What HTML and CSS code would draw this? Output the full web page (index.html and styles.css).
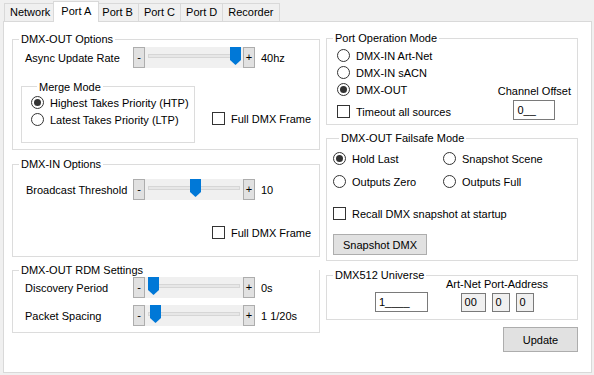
FILE: index.html
```html
<!DOCTYPE html>
<html lang="en">
<head>
    <meta charset="UTF-8">
    <meta name="viewport" content="width=device-width, initial-scale=1.0">
    <title>Port A</title>
    <link rel="stylesheet" href="styles.css">
</head>
<body>
    <div class="tabs">
        <div class="tab">Network</div>
        <div class="tab active">Port A</div>
        <div class="tab">Port B</div>
        <div class="tab">Port C</div>
        <div class="tab">Port D</div>
        <div class="tab">Recorder</div>
    </div>

    <div class="panel">
        <div class="column left">
            <div class="group dmx-out">
                <div class="group-title">DMX-OUT Options</div>
                <div class="slider-row">
                    <span class="label">Async Update Rate</span>
                    <div class="slider">
                        <button class="step">-</button>
                        <div class="track">
                            <svg class="thumb" style="left: 85px" width="11" height="18" viewBox="0 0 11 18"><path d="M0 0H11V13L5.5 18L0 13Z" fill="#0078d7"/></svg>
                        </div>
                        <button class="step">+</button>
                    </div>
                    <span class="value">40hz</span>
                </div>
                <div class="merge-row">
                    <div class="group merge">
                        <div class="group-title">Merge Mode</div>
                        <div class="option"><span class="radio checked"></span>Highest Takes Priority (HTP)</div>
                        <div class="option"><span class="radio"></span>Latest Takes Priority (LTP)</div>
                    </div>
                    <div class="option full-frame"><span class="box"></span>Full DMX Frame</div>
                </div>
            </div>

            <div class="group dmx-in">
                <div class="group-title">DMX-IN Options</div>
                <div class="slider-row">
                    <span class="label">Broadcast Threshold</span>
                    <div class="slider">
                        <button class="step">-</button>
                        <div class="track">
                            <svg class="thumb" style="left: 45px" width="11" height="18" viewBox="0 0 11 18"><path d="M0 0H11V13L5.5 18L0 13Z" fill="#0078d7"/></svg>
                        </div>
                        <button class="step">+</button>
                    </div>
                    <span class="value">10</span>
                </div>
                <div class="option full-frame"><span class="box"></span>Full DMX Frame</div>
            </div>

            <div class="group rdm">
                <div class="group-title">DMX-OUT RDM Settings</div>
                <div class="slider-row">
                    <span class="label">Discovery Period</span>
                    <div class="slider">
                        <button class="step">-</button>
                        <div class="track">
                            <svg class="thumb" style="left: 3px" width="11" height="18" viewBox="0 0 11 18"><path d="M0 0H11V13L5.5 18L0 13Z" fill="#0078d7"/></svg>
                        </div>
                        <button class="step">+</button>
                    </div>
                    <span class="value">0s</span>
                </div>
                <div class="slider-row">
                    <span class="label">Packet Spacing</span>
                    <div class="slider">
                        <button class="step">-</button>
                        <div class="track">
                            <svg class="thumb" style="left: 5px" width="11" height="18" viewBox="0 0 11 18"><path d="M0 0H11V13L5.5 18L0 13Z" fill="#0078d7"/></svg>
                        </div>
                        <button class="step">+</button>
                    </div>
                    <span class="value">1 1/20s</span>
                </div>
            </div>
        </div>

        <div class="column right">
            <div class="group port-mode">
                <div class="group-title">Port Operation Mode</div>
                <div class="port-body">
                    <div class="options">
                        <div class="option"><span class="radio"></span>DMX-IN Art-Net</div>
                        <div class="option"><span class="radio"></span>DMX-IN sACN</div>
                        <div class="option"><span class="radio checked"></span>DMX-OUT</div>
                        <div class="option timeout"><span class="box"></span>Timeout all sources</div>
                    </div>
                    <div class="offset">
                        <span>Channel Offset</span>
                        <div class="field offset-field">0__</div>
                    </div>
                </div>
            </div>

            <div class="group failsafe">
                <div class="group-title">DMX-OUT Failsafe Mode</div>
                <div class="failsafe-grid">
                    <div class="option"><span class="radio checked"></span>Hold Last</div>
                    <div class="option"><span class="radio"></span>Snapshot Scene</div>
                    <div class="option"><span class="radio"></span>Outputs Zero</div>
                    <div class="option"><span class="radio"></span>Outputs Full</div>
                </div>
                <div class="option recall"><span class="box"></span>Recall DMX snapshot at startup</div>
                <button class="win-btn snapshot">Snapshot DMX</button>
            </div>

            <div class="group universe">
                <div class="group-title">DMX512 Universe</div>
                <div class="universe-body">
                    <div class="field universe-field">1____</div>
                    <div class="address">
                        <span>Art-Net Port-Address</span>
                        <div class="address-fields">
                            <div class="field readonly net">00</div>
                            <div class="field readonly">0</div>
                            <div class="field readonly">0</div>
                        </div>
                    </div>
                </div>
            </div>

            <button class="win-btn update">Update</button>
        </div>
    </div>
</body>
</html>
```

FILE: styles.css
```css
body {
    font-family: "Liberation Sans", Arial, sans-serif;
    font-size: 11px;
    color: #000;
    background-color: #F0F0F0;
    margin: 0;
    padding: 0;
    width: 594px;
    height: 375px;
    overflow: hidden;
}

/* tab strip */
.tabs {
    display: flex;
    align-items: flex-end;
    height: 21px;
    padding-left: 4px;
}
.tab {
    height: 18px;
    box-sizing: border-box;
    padding: 0 5px;
    border: 1px solid #D9D9D9;
    border-bottom: none;
    background: #F0F0F0;
    line-height: 17px;
    white-space: nowrap;
}
.tab + .tab {
    margin-left: -1px;
}
.tab.active {
    height: 21px;
    margin: 0 -2px -1px -3px;
    padding: 0 7px;
    background: white;
    position: relative;
    z-index: 1;
    line-height: 19px;
}

.panel {
    display: flex;
    gap: 6px;
    height: 352px;
    box-sizing: border-box;
    margin: 0 2px 0 3px;
    padding: 16px 13px 0 8px;
    border: 1px solid #D9D9D9;
    background: white;
}
.column {
    display: flex;
    flex-direction: column;
}
.column.left {
    width: 308px;
    padding-top: 1px;
}
.column.right {
    width: 252px;
}

/* group boxes */
.group {
    border: 1px solid #DCDCDC;
    box-sizing: border-box;
}
.group-title {
    display: table;
    margin: -8px 0 0 6px;
    padding: 0 2px;
    background: white;
    line-height: 14px;
    white-space: nowrap;
}

/* radios and checkboxes */
.option {
    display: flex;
    align-items: center;
    gap: 6px;
    height: 17px;
    white-space: nowrap;
}
.radio {
    display: flex;
    align-items: center;
    justify-content: center;
    width: 13px;
    height: 13px;
    box-sizing: border-box;
    border: 1px solid #333;
    border-radius: 50%;
    background: white;
}
.radio.checked::after {
    content: '';
    width: 7px;
    height: 7px;
    border-radius: 50%;
    background: #333;
}
.box {
    width: 13px;
    height: 13px;
    box-sizing: border-box;
    border: 1px solid #333;
    background: white;
}

/* trackbars */
.slider-row {
    display: flex;
    align-items: center;
    padding-left: 12px;
    white-space: nowrap;
}
.slider-row .label {
    width: 108px;
}
.slider {
    display: flex;
    width: 122px;
    height: 21px;
}
.step {
    width: 12px;
    height: 21px;
    padding: 0;
    border: 1px solid #ADADAD;
    background: #E1E1E1;
    font-family: inherit;
    font-size: 11px;
    line-height: 17px;
    color: #000;
}
.track {
    flex: 1;
    position: relative;
    background: #F0F0F0;
}
.track::before {
    content: '';
    position: absolute;
    top: 7px;
    left: 3px;
    right: 3px;
    height: 4px;
    box-sizing: border-box;
    border: 1px solid #D6D6D6;
    background: #E7E7E7;
}
.thumb {
    position: absolute;
    top: 0;
    display: block;
}
.value {
    margin-left: 6px;
}

/* left groups */
.dmx-out {
    height: 111px;
}
.dmx-out .slider-row {
    margin-top: 1px;
}
.merge-row {
    display: flex;
    margin-top: 18px;
}
.merge {
    width: 174px;
    height: 57px;
    margin-left: 8px;
    padding: 1px 0 0 9px;
}
.full-frame {
    margin-left: 17px;
    margin-top: 24px;
}
.dmx-in {
    height: 93px;
    margin-top: 14px;
}
.dmx-in .slider-row {
    margin-top: 8px;
    padding-left: 13px;
}
.dmx-in .slider-row .label {
    width: 107px;
}
.dmx-in .full-frame {
    margin-left: 199px;
}
.rdm {
    height: 63px;
    margin-top: 13px;
    display: flex;
    flex-direction: column;
    gap: 7px;
}
.rdm .group-title {
    margin-bottom: -7px;
}

/* text fields and buttons */
.field {
    box-sizing: border-box;
    border: 1px solid #7A7A7A;
    background: white;
    padding: 0 3px;
    line-height: 18px;
}
.field.readonly {
    background: #F0F0F0;
    height: 19px;
    line-height: 17px;
    width: 18px;
}
.field.net {
    width: 25px;
}
.win-btn {
    border: 1px solid #ADADAD;
    background: #E1E1E1;
    font-family: inherit;
    font-size: 11px;
    color: #000;
    padding: 0;
}

/* right groups */
.port-mode {
    height: 87px;
}
.port-body {
    display: flex;
    justify-content: space-between;
}
.options {
    padding: 2px 0 0 10px;
}
.timeout {
    margin-top: 5px;
}
.offset {
    display: flex;
    flex-direction: column;
    align-items: center;
    justify-content: flex-end;
    margin-right: 6px;
}
.offset span {
    line-height: 14px;
}
.offset-field {
    width: 42px;
    height: 20px;
    margin-top: 2px;
}
.failsafe {
    height: 123px;
    margin-top: 13px;
    padding-left: 6px;
}
.failsafe-grid {
    display: grid;
    grid-template-columns: 110px auto;
    row-gap: 6px;
    margin-top: 5px;
}
.recall {
    margin-top: 15px;
}
.snapshot {
    display: block;
    width: 94px;
    height: 21px;
    margin-top: 12px;
}
.universe {
    height: 45px;
    margin-top: 14px;
}
.universe-body {
    display: flex;
    align-items: flex-end;
    margin-top: -5px;
}
.universe-field {
    width: 53px;
    height: 20px;
    margin-left: 48px;
}
.address {
    display: flex;
    flex-direction: column;
    align-items: center;
    margin-left: 18px;
}
.address span {
    line-height: 14px;
}
.address-fields {
    display: flex;
    gap: 6px;
    margin-top: 2px;
}
.update {
    align-self: flex-end;
    width: 75px;
    height: 25px;
    margin-top: 7px;
}
```
